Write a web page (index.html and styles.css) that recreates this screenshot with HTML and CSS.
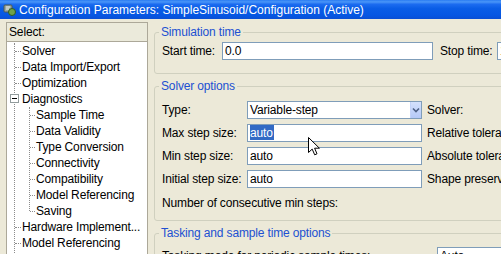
FILE: index.html
```html
<!DOCTYPE html>
<html lang="en">
<head>
    <meta charset="UTF-8">
    <meta name="viewport" content="width=device-width, initial-scale=1.0">
    <title>Configuration Parameters</title>
    <link rel="stylesheet" href="styles.css">
</head>
<body>
<div class="window">
    <div class="titlebar">
        <svg class="app-icon" width="14" height="14" viewBox="0 0 14 14">
            <rect x="1" y="2" width="8" height="7" rx="1" fill="#9aa4a0" stroke="#4a5a52" stroke-width="1"/>
            <circle cx="9" cy="9" r="3.5" fill="#6fa34a" stroke="#2f5a22" stroke-width="1"/>
            <path d="M3 4h4M3 6h3" stroke="#e8f0ea" stroke-width="1"/>
        </svg>
        <span class="title">Configuration Parameters: SimpleSinusoid/Configuration (Active)</span>
    </div>

    <div class="client">
        <!-- tree of categories -->
        <div class="nav">
            <div class="nav-head">Select:</div>
            <div class="tree">
                <ul class="tree-root">
                    <li>Solver</li>
                    <li>Data Import/Export</li>
                    <li>Optimization</li>
                    <li class="open">Diagnostics
                        <ul class="tree-sub">
                            <li>Sample Time</li>
                            <li>Data Validity</li>
                            <li>Type Conversion</li>
                            <li>Connectivity</li>
                            <li>Compatibility</li>
                            <li>Model Referencing</li>
                            <li>Saving</li>
                        </ul>
                    </li>
                    <li>Hardware Implement...</li>
                    <li>Model Referencing</li>
                </ul>
            </div>
        </div>

        <!-- option panes -->
        <div class="panes">
            <fieldset class="group group-sim">
                <legend>Simulation time</legend>
                <div class="sim-row">
                    <span class="lbl start-lbl">Start time:</span>
                    <span class="field start-field">0.0</span>
                    <span class="lbl stop-lbl">Stop time:</span>
                    <span class="field stop-field">10.0</span>
                </div>
            </fieldset>

            <fieldset class="group group-solver">
                <legend>Solver options</legend>
                <div class="solver-grid">
                    <span class="lbl">Type:</span>
                    <span class="field combo">Variable-step<span class="combo-btn"><svg width="8" height="6" viewBox="0 0 8 6"><path d="M1 1.5l3 3 3-3" fill="none" stroke="#4d6185" stroke-width="1.6"/></svg></span></span>
                    <span class="lbl side">Solver:</span>

                    <span class="lbl">Max step size:</span>
                    <span class="field"><span class="sel">auto</span></span>
                    <span class="lbl side">Relative tolerance:</span>

                    <span class="lbl">Min step size:</span>
                    <span class="field">auto</span>
                    <span class="lbl side">Absolute tolerance:</span>

                    <span class="lbl">Initial step size:</span>
                    <span class="field">auto</span>
                    <span class="lbl side">Shape preservation:</span>

                    <span class="lbl wide">Number of consecutive min steps:</span>
                </div>
            </fieldset>

            <fieldset class="group group-task">
                <legend>Tasking and sample time options</legend>
                <div class="task-row">
                    <span class="lbl task-lbl">Tasking mode for periodic sample times:</span>
                    <span class="field task-field">Auto</span>
                </div>
            </fieldset>
        </div>
    </div>

    <svg class="pointer" width="13" height="19" viewBox="0 0 13 19">
        <path d="M0.5 0.5V15.5L4.2 12.1L6.7 17.8L9 16.8L6.6 11.2H11.4Z" fill="#fff" stroke="#000" stroke-width="1" stroke-linejoin="miter"/>
    </svg>
</div>
</body>
</html>
```

FILE: styles.css
```css
/* General */
body {
    margin: 0;
    background-color: #ece9d8;
    font-family: "Liberation Sans", Arial, sans-serif;
    font-size: 12px;
    letter-spacing: -0.15px;
    color: #000;
    overflow: hidden;
}

.window {
    position: relative;
    width: 760px;
    height: 254px;
    overflow: hidden;
}

/* Title bar */
.titlebar {
    height: 19px;
    display: flex;
    align-items: center;
    padding-left: 3px;
    gap: 2px;
    color: #fff;
    background: linear-gradient(to bottom, #2a7cf2 0%, #4a96f8 10%, #1c6cf0 22%, #0a5de6 45%, #0657e3 80%, #0a4fd4 100%);
}

.app-icon {
    flex: none;
}

.title {
    font-size: 12px;
    letter-spacing: 0;
    padding-top: 1px;
}

/* Main area */
.client {
    display: flex;
    padding: 3px 0 0 6px;
}

/* Left tree */
.nav {
    width: 142px;
    height: 240px;
    flex: none;
    box-sizing: border-box;
    border: 1px solid #aca899;
    display: flex;
    flex-direction: column;
}

.nav-head {
    height: 18px;
    line-height: 18px;
    padding-left: 2px;
    background-color: #ebeadb;
    border-bottom: 1px solid #aca899;
}

.tree {
    flex: 1;
    background-color: #fff;
    padding-top: 1px;
    overflow: hidden;
}

.tree ul {
    list-style: none;
    margin: 0;
    padding: 0;
}

.tree li {
    line-height: 16px;
    white-space: nowrap;
}

.tree li::before {
    content: "";
    display: inline-block;
    width: 6px;
    height: 0;
    border-top: 1px dotted #8c8c8c;
    vertical-align: middle;
    margin-right: 1px;
}

.tree-root {
    margin-left: 7px !important;
    border-left: 1px dotted #8c8c8c;
    padding-bottom: 20px !important;
}

/* expander box on the open node */
.tree li.open::before {
    width: 7px;
    height: 7px;
    border: 1px solid #919b9c;
    margin-left: -5px;
    margin-right: 3px;
    margin-top: -2px;
    background: #fff linear-gradient(#000, #000) no-repeat center / 5px 1px;
}

.tree-sub {
    margin-left: 14px !important;
    border-left: 1px dotted #8c8c8c;
}

.tree-sub li::before {
    width: 5px;
}

.tree-sub li:last-child {
    position: relative;
}

.tree-sub li:last-child::after {
    content: "";
    position: absolute;
    left: -1px;
    top: 9px;
    width: 1px;
    height: 7px;
    background-color: #fff;
}

/* Right panes */
.panes {
    margin-left: 6px;
    width: 600px;
    flex: none;
}

.group {
    margin: 5px 0 0 0;
    padding: 0 0 0 7px;
    border: 1px solid #d0d0bf;
    border-radius: 3px;
    min-width: 0;
}

.group legend {
    line-height: 15px;
    padding: 0 2px;
    margin-left: -3px;
    color: #2150d2;
}

.group-sim {
    margin-top: 3px;
    padding-top: 2px;
    padding-bottom: 13px;
}

.group-solver {
    padding-top: 7px;
    padding-bottom: 8px;
}

.group-task {
    padding-top: 6px;
    padding-bottom: 10px;
}

.lbl {
    white-space: nowrap;
}

/* Text fields */
.field {
    display: block;
    box-sizing: border-box;
    height: 18px;
    line-height: 16px;
    padding-left: 2px;
    background-color: #fff;
    border: 1px solid #7f9db9;
    white-space: nowrap;
    overflow: hidden;
}

.sel {
    background-color: #316ac5;
    color: #fff;
    display: inline-block;
    height: 15px;
    padding-right: 1px;
}

/* Simulation time row */
.sim-row {
    display: flex;
    align-items: center;
}

.start-lbl {
    width: 60px;
    flex: none;
}

.start-field {
    width: 211px;
    flex: none;
}

.stop-lbl {
    width: 57px;
    margin-left: 7px;
    flex: none;
}

.stop-field {
    width: 120px;
    flex: none;
}

/* Solver options grid */
.solver-grid {
    display: grid;
    grid-template-columns: 85px 175px 1fr;
    row-gap: 5px;
    align-items: center;
}

.side {
    padding-left: 5px;
}

.wide {
    grid-column: 1 / 4;
    line-height: 18px;
    margin-top: 1px;
}

.combo {
    position: relative;
}

.combo-btn {
    position: absolute;
    right: 0;
    top: 0;
    width: 10px;
    height: 16px;
    display: flex;
    align-items: center;
    justify-content: center;
    background: linear-gradient(#d4e1fc, #b5c9f7);
    border-left: 1px solid #c3d3f8;
}

/* Tasking row */
.task-row {
    display: flex;
    align-items: center;
}

.task-lbl {
    width: 275px;
    flex: none;
}

.task-field {
    width: 140px;
    flex: none;
}

/* mouse pointer over the field */
.pointer {
    position: absolute;
    left: 308px;
    top: 137px;
}
```
